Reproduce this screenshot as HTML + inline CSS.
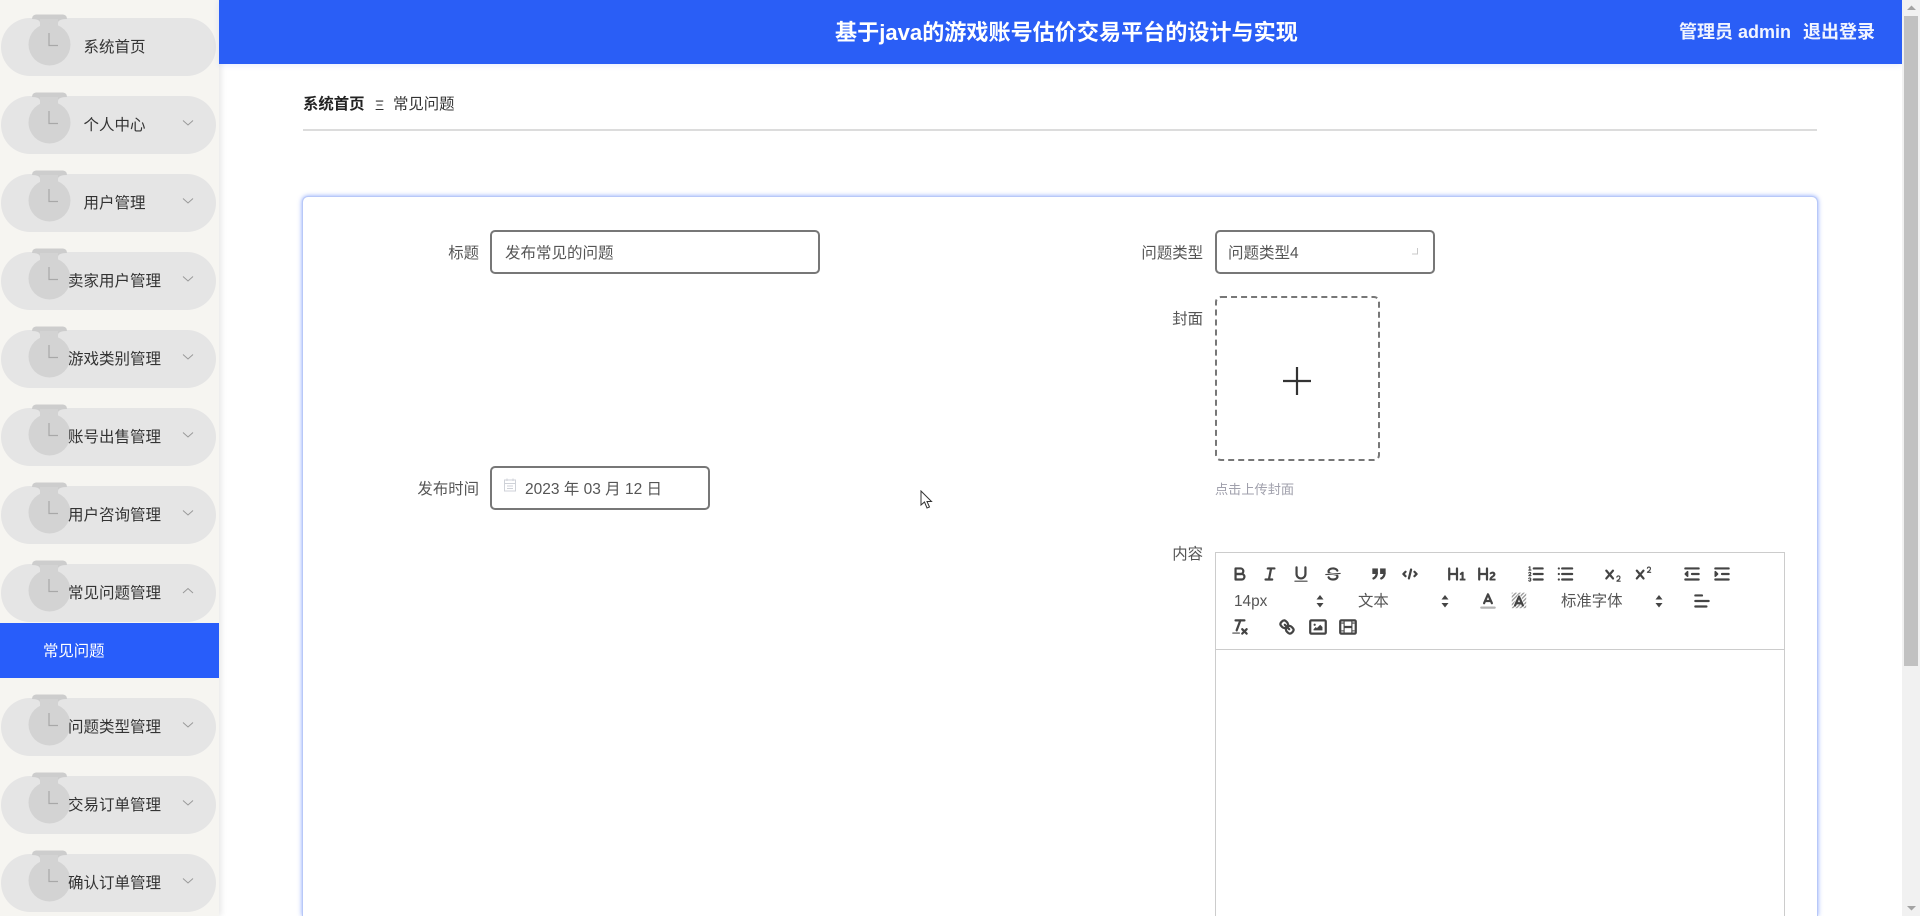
<!DOCTYPE html>
<html lang="zh"><head><meta charset="utf-8"><title>常见问题</title>
<style>
html,body{margin:0;padding:0;width:1920px;height:916px;overflow:hidden;background:#fff}
body{font-family:"Liberation Sans","Noto Sans CJK SC",sans-serif;position:relative;color:#333}
.a{position:absolute;white-space:nowrap}
#side{left:0;top:0;width:219px;height:916px;background:#f6f5f1;box-shadow:2px 0 6px rgba(0,0,0,.1)}
.pill{position:absolute;left:1px;width:215px;height:58px;border-radius:29px;background:#e5e5e5}
.pill svg{position:absolute;left:-1px;top:-18px;overflow:visible}
.pill span{position:absolute;top:19px;height:22px;line-height:22px;font-size:15.5px;color:#333;white-space:nowrap}
.t{left:82.5px}.l{left:67px}
.lb{font-size:15.4px;line-height:22px;height:22px;color:#555;text-align:right}
.box{border:2px solid #777;border-radius:5px;box-sizing:border-box;background:#fff}
.val{font-size:15.5px;line-height:22px;height:22px;color:#555}
.s{fill:none;stroke:#444;stroke-width:2;stroke-linecap:round;stroke-linejoin:round}
.n{fill:none;stroke:#444;stroke-width:1;stroke-linecap:round;stroke-linejoin:round}
.f{fill:#444}
.tb{font-size:15.4px;line-height:22px;height:22px;color:#555}
</style></head><body>
<svg width="0" height="0" style="position:absolute"><defs>
<symbol id="ic" viewBox="0 0 80 80" overflow="visible">
<path d="M32 19q0-4 4-4.500h27q4 .5 4 4.500q-9 0-9 4H40q0-4-8-4z" fill="#cdcdcd"/>
<rect x="40" y="19" width="18" height="24" fill="#d3d3d3"/>
<circle cx="49.500" cy="44.500" r="21" fill="#d3d3d3"/>
<path d="M49 33v12.500h9" fill="none" stroke="#a8a8a8" stroke-width="1.200"/>
</symbol>
<symbol id="dn" viewBox="0 0 12 8"><path d="M1 1.500l5 4.500 5-4.500" fill="none" stroke="#999" stroke-width="1"/></symbol>
<symbol id="up" viewBox="0 0 12 8"><path d="M1 6l5-4.500 5 4.500" fill="none" stroke="#999" stroke-width="1"/></symbol>
<pattern id="hatch" width="2.500" height="2.500" patternUnits="userSpaceOnUse" patternTransform="rotate(45)"><rect width="1.200" height="2.500" fill="#999"/></pattern>
</defs></svg>

<div class="a" id="side">
<div class="pill" style="top:18px"><svg width="80" height="80"><use href="#ic"/></svg><span class="t">系统首页</span></div>
<div class="pill" style="top:96px"><svg width="80" height="80"><use href="#ic"/></svg><span class="t">个人中心</span><svg style="left:181px;top:23px" width="12" height="8"><use href="#dn"/></svg></div>
<div class="pill" style="top:174px"><svg width="80" height="80"><use href="#ic"/></svg><span class="t">用户管理</span><svg style="left:181px;top:23px" width="12" height="8"><use href="#dn"/></svg></div>
<div class="pill" style="top:252px"><svg width="80" height="80"><use href="#ic"/></svg><span class="l">卖家用户管理</span><svg style="left:181px;top:23px" width="12" height="8"><use href="#dn"/></svg></div>
<div class="pill" style="top:330px"><svg width="80" height="80"><use href="#ic"/></svg><span class="l">游戏类别管理</span><svg style="left:181px;top:23px" width="12" height="8"><use href="#dn"/></svg></div>
<div class="pill" style="top:408px"><svg width="80" height="80"><use href="#ic"/></svg><span class="l">账号出售管理</span><svg style="left:181px;top:23px" width="12" height="8"><use href="#dn"/></svg></div>
<div class="pill" style="top:486px"><svg width="80" height="80"><use href="#ic"/></svg><span class="l">用户咨询管理</span><svg style="left:181px;top:23px" width="12" height="8"><use href="#dn"/></svg></div>
<div class="pill" style="top:564px"><svg width="80" height="80"><use href="#ic"/></svg><span class="l">常见问题管理</span><svg style="left:181px;top:23px" width="12" height="8"><use href="#up"/></svg></div>
<div class="a" style="left:0;top:623px;width:219px;height:55px;background:#285dfa;color:#fff;font-size:15.4px;line-height:57px;text-indent:43px">常见问题</div>
<div class="pill" style="top:698px"><svg width="80" height="80"><use href="#ic"/></svg><span class="l">问题类型管理</span><svg style="left:181px;top:23px" width="12" height="8"><use href="#dn"/></svg></div>
<div class="pill" style="top:776px"><svg width="80" height="80"><use href="#ic"/></svg><span class="l">交易订单管理</span><svg style="left:181px;top:23px" width="12" height="8"><use href="#dn"/></svg></div>
<div class="pill" style="top:854px"><svg width="80" height="80"><use href="#ic"/></svg><span class="l">确认订单管理</span><svg style="left:181px;top:23px" width="12" height="8"><use href="#dn"/></svg></div>
</div>

<div class="a" style="left:219px;top:0;width:1683px;height:64px;background:#2a5ef6;box-shadow:0 1px 6px rgba(40,93,250,.12)"></div>
<div class="a" style="left:835px;top:17px;height:32px;line-height:32px;font-size:22.1px;font-weight:bold;color:#fff">基于java的游戏账号估价交易平台的设计与实现</div>
<div class="a" style="left:1679px;top:20px;height:24px;line-height:24px;font-size:18px;font-weight:bold;color:#f2f5ff">管理员 admin</div>
<div class="a" style="left:1803px;top:20px;height:24px;line-height:24px;font-size:18px;font-weight:bold;color:#f2f5ff">退出登录</div>

<div class="a" style="left:303px;top:94px;font-size:15.4px;line-height:22px;font-weight:bold;color:#222">系统首页</div>
<div class="a" style="left:375px;top:94px;font-size:14px;line-height:22px;color:#333">Ξ</div>
<div class="a" style="left:393px;top:94px;font-size:15.4px;line-height:22px;color:#333">常见问题</div>
<div class="a" style="left:303px;top:129px;width:1514px;height:2px;background:#dcdcdc"></div>

<div class="a" style="left:302px;top:196px;width:1516px;height:720px;box-sizing:border-box;border:1px solid #b8c8f8;border-bottom:0;border-radius:6px 6px 0 0;background:#fff;box-shadow:0 0 5px rgba(40,93,250,.55)"></div>

<div class="a lb" style="left:420px;width:59px;top:243px">标题</div>
<div class="a box" style="left:490px;top:230px;width:330px;height:44px"></div>
<div class="a val" style="left:505px;top:243px">发布常见的问题</div>

<div class="a lb" style="left:1120px;width:83px;top:243px">问题类型</div>
<div class="a box" style="left:1215px;top:230px;width:220px;height:44px"></div>
<div class="a val" style="left:1228px;top:243px">问题类型4</div>
<svg class="a" style="left:1411px;top:247px" width="8" height="8"><path d="M6.500 1v6H1" fill="none" stroke="#c8c8c8" stroke-width="1"/></svg>

<div class="a lb" style="left:1120px;width:83px;top:309px">封面</div>
<div class="a" style="left:1215px;top:296px;width:165px;height:165px;box-sizing:border-box;border:2px dashed #777;border-radius:6px"></div>
<svg class="a" style="left:1282px;top:366px" width="30" height="30"><path d="M15 1v28M1 15h28" stroke="#333" stroke-width="2.200" fill="none"/></svg>
<div class="a" style="left:1215px;top:480px;font-size:13.2px;line-height:20px;color:#a0a0ac">点击上传封面</div>

<div class="a lb" style="left:400px;width:79px;top:479px">发布时间</div>
<div class="a box" style="left:490px;top:466px;width:220px;height:44px"></div>
<svg class="a" style="left:502px;top:477px" width="16" height="16"><path d="M2.500 3h11v11h-11zM2.500 6.500h11M5 1.500v2.500M11 1.500v2.500M5 9h6M5 11.500h6" fill="none" stroke="#cfd2d8" stroke-width="1"/></svg>
<div class="a val" style="left:525px;top:479px">2023 年 03 月 12 日</div>

<svg class="a" style="left:920px;top:490px" width="14" height="20"><path d="M1 1v14l3.500-3 2.500 6 2.500-1-2.500-5.500h4.500z" fill="#fff" stroke="#333" stroke-width="1"/></svg>

<div class="a lb" style="left:1120px;width:83px;top:544px">内容</div>
<div class="a" style="left:1215px;top:552px;width:570px;height:364px;box-sizing:border-box;border:1px solid #ccc;border-bottom:0"></div>
<div class="a" style="left:1216px;top:649px;width:568px;height:1px;background:#ccc"></div>

<div class="a tb" style="left:1234px;top:591px">14px</div>
<div class="a tb" style="left:1358px;top:591px">文本</div>
<div class="a tb" style="left:1561px;top:591px">标准字体</div>

<svg class="a" style="left:0;top:0" width="1920" height="916">
<g transform="translate(1230,564) scale(1.11)"><path class="s" d="M5,4H9.500A2.500,2.500,0,0,1,12,6.500v0A2.500,2.500,0,0,1,9.500,9H5V4Z"/><path class="s" d="M5,9h5.500A2.500,2.500,0,0,1,13,11.500v0A2.500,2.500,0,0,1,10.500,14H5V9Z"/></g>
<g transform="translate(1260,564) scale(1.11)"><path class="s" d="M7 4H13M5 14H11M8 14L10 4"/></g>
<g transform="translate(1291,564) scale(1.11)"><path class="s" d="M5,3V9a4.012,4.012,0,0,0,4,4H9a4.012,4.012,0,0,0,4-4V3"/><rect class="f" height="1" rx=".5" ry=".5" width="12" x="3" y="15"/></g>
<g transform="translate(1323,564) scale(1.11)"><path class="n" d="M15.500 8.500L2.500 9.500"/><path class="f" d="M9.007,8C6.542,7.791,6,7.519,6,6.500,6,5.792,7.283,5,9,5c1.571,0,2.765.679,2.969,1.309a1,1,0,0,0,1.900-.617C13.356,4.106,11.354,3,9,3,6.200,3,4,4.538,4,6.500a3.200,3.200,0,0,0,.5,1.843Z"/><path class="f" d="M8.984,10C11.457,10.208,12,10.479,12,11.500c0,.708-1.283,1.500-3,1.500-1.571,0-2.765-.679-2.969-1.309a1,1,0,1,0-1.900.617C4.644,13.894,6.646,15,9,15c2.800,0,5-1.538,5-3.500a3.200,3.200,0,0,0-.5-1.843Z"/></g>
<g transform="translate(1369,564) scale(1.11)"><rect class="f" height="3" width="3" x="4" y="5" stroke="#444" stroke-width="2"/><rect class="f" height="3" width="3" x="11" y="5" stroke="#444" stroke-width="2"/><path class="s" d="M7,8c0,4.031-3,5-3,5M14,8c0,4.031-3,5-3,5"/></g>
<g transform="translate(1400,564) scale(1.11)"><path class="s" d="M5 7L3 9 5 11M13 7L15 9 13 11M10 5L8 13"/></g>
<g transform="translate(1447,564) scale(1.11)"><path class="f" d="M10,4V14a1,1,0,0,1-2,0V10H3v4a1,1,0,0,1-2,0V4A1,1,0,0,1,3,4V8H8V4a1,1,0,0,1,2,0Zm6.068,9.209H14.990V7.599a.541.541,0,0,0-.605-.605h-.627a1.011,1.011,0,0,0-.748.297L11.645,8.566a.544.544,0,0,0-.022.858l.286.308a.539.539,0,0,0,.847.033l.099-.088a1.214,1.214,0,0,0,.242-.353h.022s-.011.309-.011.605V13.209H12.041a.541.541,0,0,0-.605.605v.439a.541.541,0,0,0,.605.605h4.027a.541.541,0,0,0,.605-.605v-.439A.541.541,0,0,0,16.068,13.209Z"/></g>
<g transform="translate(1477,564) scale(1.11)"><path class="f" d="M16.740,13.814v.439a.541.541,0,0,1-.605.605H11.855a.584.584,0,0,1-.649-.605V14.013c0-2.905,3.399-3.422,3.399-4.555a.777.777,0,0,0-.847-.781,1.177,1.177,0,0,0-.836.385c-.275.264-.561.374-.858.132l-.429-.341c-.308-.242-.385-.518-.154-.814a2.972,2.972,0,0,1,2.454-1.177,2.454,2.454,0,0,1,2.684,2.409c0,2.453-3.179,2.927-3.278,3.938h2.794A.541.541,0,0,1,16.740,13.814ZM9,3A1,1,0,0,0,8,4V8H3V4A1,1,0,0,0,1,4V14a1,1,0,0,0,2,0V10H8v4a1,1,0,0,0,2,0V4A1,1,0,0,0,9,3Z"/></g>
<g transform="translate(1526,564) scale(1.11)"><path class="s" d="M7 4H15M7 9H15M7 14H15"/><path class="n" d="M2.500 5.500H4.500"/><path class="f" d="M3.500,6A.5,.5,0,0,1,3,5.500V3.085l-.276.138A.5,.5,0,0,1,2.053,3c-.124-.247-.023-.324.224-.447l1-.5A.5,.5,0,0,1,4,2.500v3A.5,.5,0,0,1,3.500,6Z"/><path class="n" d="M4.500,10.500h-2c0-.234,1.850-1.076,1.850-2.234A.959,.959,0,0,0,2.500,8.156"/><path class="n" d="M2.500,14.846a.959,.959,0,0,0,1.850-.109A.7,.7,0,0,0,3.750,14a.688,.688,0,0,0,.6-.736,.959,.959,0,0,0-1.850-.109"/></g>
<g transform="translate(1555.500,564) scale(1.11)"><path class="s" d="M6 4H15M6 9H15M6 14H15M3 4H3M3 9H3M3 14H3"/></g>
<g transform="translate(1603,564) scale(1.11)"><path class="f" d="M15.500,15H13.861a3.858,3.858,0,0,0,1.914-2.975,1.800,1.800,0,0,0-1.600-1.751A1.921,1.921,0,0,0,12.021,11.700a.5,.5,0,1,0,.957.291h0a.914,.914,0,0,1,1.053-.725,.81,.81,0,0,1,.744.762c0,1.076-1.170,1.870-1.940,2.431A1.456,1.456,0,0,0,12,15.500a.5,.5,0,0,0,.5.5h3A.5,.5,0,0,0,15.500,15Z"/><path class="f" d="M9.650,5.241a1,1,0,0,0-1.409.108L6,7.964,3.759,5.349A1,1,0,0,0,2.192,6.592Q2.215,6.621,2.241,6.649L4.684,9.500,2.241,12.350A1,1,0,0,0,3.710,13.707q.026-.028.049-.057L6,11.036,8.241,13.650a1,1,0,1,0,1.567-1.243Q9.785,12.378,9.759,12.350L7.316,9.500,9.759,6.651A1,1,0,0,0,9.650,5.241Z"/></g>
<g transform="translate(1633.500,564) scale(1.11)"><path class="f" d="M15.500,7H13.861a4.015,4.015,0,0,0,1.914-2.975,1.800,1.800,0,0,0-1.600-1.751A1.922,1.922,0,0,0,12.021,3.700a.5,.5,0,1,0,.957.291,.917,.917,0,0,1,1.053-.725,.81,.81,0,0,1,.744.762c0,1.077-1.164,1.925-1.934,2.486A1.423,1.423,0,0,0,12,7.500a.5,.5,0,0,0,.5.5h3A.5,.5,0,0,0,15.500,7Z"/><path class="f" d="M9.650,5.241a1,1,0,0,0-1.409.108L6,7.964,3.759,5.349A1,1,0,0,0,2.192,6.592Q2.215,6.621,2.241,6.649L4.684,9.500,2.241,12.350A1,1,0,0,0,3.710,13.707q.026-.028.049-.057L6,11.036,8.241,13.650a1,1,0,1,0,1.567-1.243Q9.785,12.378,9.759,12.350L7.316,9.500,9.759,6.651A1,1,0,0,0,9.650,5.241Z"/></g>
<g transform="translate(1682,564) scale(1.11)"><path class="s" d="M3 14H15M3 4H15M9 9H15"/><polygon points="5 7 5 11 3 9" class="f" stroke="#444" stroke-width="1.500" stroke-linejoin="round"/></g>
<g transform="translate(1712,564) scale(1.11)"><path class="s" d="M3 14H15M3 4H15M9 9H15"/><polygon points="3 7 3 11 5 9" class="f" stroke="#444" stroke-width="1.500" stroke-linejoin="round"/></g>

<path class="f" d="M1320 595l3.500 4.500h-7zM1320 607.500l3.500-4.500h-7zM1445 595l3.500 4.500h-7zM1445 607.500l3.500-4.500h-7zM1659 595l3.500 4.500h-7zM1659 607.500l3.500-4.500h-7z"/>
<g transform="translate(1478,591) scale(1.11)"><path d="M3 15H15" stroke="#444" stroke-width="2" stroke-linecap="round" opacity=".4" fill="none"/><path class="s" d="M5.500 11L9 3 12.500 11M11.630 9H6.380"/></g>
<g transform="translate(1509,591) scale(1.11)"><rect x="2.500" y="1.500" width="13" height="14" fill="url(#hatch)"/><path fill="none" stroke="#fff" stroke-width="3.500" stroke-linejoin="round" opacity=".7" d="M5.500 13L9 5 12.500 13"/><path class="s" d="M5.500 13L9 5 12.500 13M11.630 11H6.380"/></g>
<g transform="translate(1692,591) scale(1.11)"><path class="s" d="M3 9H15M3 14H13M3 4H9"/></g>

<g transform="translate(1230,617) scale(1.11)"><path class="s" d="M5 3H13M6 12L9.350 3M11 11L15 15M15 11L11 15"/><rect class="f" height="1" rx=".5" ry=".5" width="7" x="2" y="14"/></g>
<g transform="translate(1277,617) scale(1.11)"><path class="s" d="M7 7L11 11"/><path class="s" d="M8.900,4.577a3.476,3.476,0,0,1,.36,4.679A3.476,3.476,0,0,1,4.577,8.900C3.185,7.500,2.035,6.400,4.217,4.217S7.500,3.185,8.900,4.577Z"/><path class="s" d="M13.423,9.100a3.476,3.476,0,0,0-4.679-.36,3.476,3.476,0,0,0,.36,4.679c1.392,1.392,2.500,2.542,4.679.36S14.815,10.500,13.423,9.100Z"/></g>
<g transform="translate(1308,617) scale(1.11)"><rect class="s" x="2" y="3" width="14" height="12" rx="1"/><circle class="f" cx="6" cy="7" r="1"/><polygon class="f" points="5 12 5 11 7 9 8 10 11 7 13 9 13 12"/></g>
<g transform="translate(1338,617) scale(1.11)"><rect class="s" x="2" y="3" width="14" height="12" rx="1"/><path class="f" d="M5 3h1v12H5zM12 3h1v12h-1zM5 8h8v2H5zM3 5h3v1H3zM3 12h3v1H3zM12 5h3v1h-3zM12 12h3v1h-3z"/></g>
</svg>

<div class="a" style="left:1902px;top:0;width:18px;height:916px;background:#f1f1f1"></div>
<div class="a" style="left:1904px;top:16px;width:14px;height:650px;background:#c1c1c1"></div>
<svg class="a" style="left:1903px;top:0" width="17" height="916"><path d="M8.500 5.500l4.500 4.500H4zM8.500 910.500l4.500-4.500H4z" fill="#a3a3a3"/></svg>
</body></html>
